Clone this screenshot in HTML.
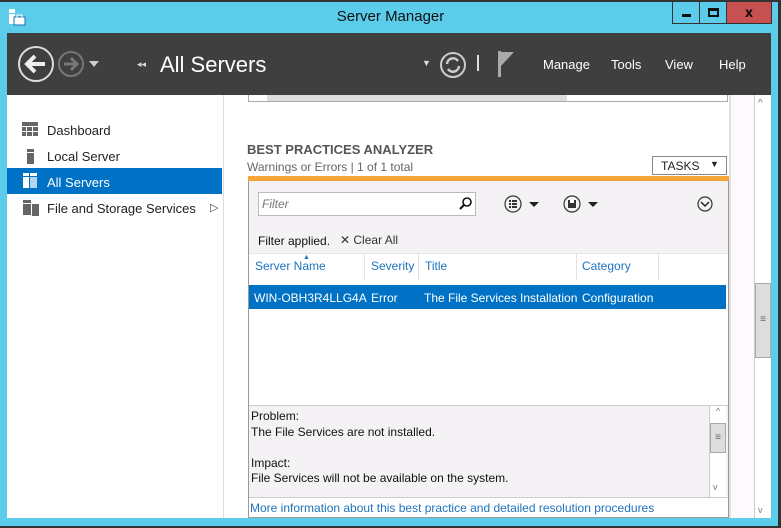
<!DOCTYPE html><html><head><style>
*{margin:0;padding:0;box-sizing:border-box}
body{width:781px;height:528px;overflow:hidden;background:#5bcdea;font-family:"Liberation Sans",sans-serif;position:relative;font-size:12px}
.a{position:absolute}
</style></head><body>
<div class="a" style="left:0;top:0;width:781px;height:2px;background:#333"></div>
<svg class="a" style="top:8px;left:8px" width="18" height="18"><rect x="1" y="1" width="6" height="4" fill="#fff"/><rect x="1" y="6" width="6" height="10" fill="#fff"/><rect x="6" y="9" width="11" height="8" fill="#fff" stroke="#1a6fb0"/><rect x="9" y="7" width="5" height="3" fill="none" stroke="#fff"/></svg>
<div class="a" style="left:0;width:781px;top:8px;text-align:center;font-size:15px;color:#111">Server Manager</div>
<div class="a" style="left:672px;top:2px;width:28px;height:22px;border:1px solid #333;border-top:none"><div class="a" style="left:9px;top:12px;width:9px;height:3px;background:#111"></div></div>
<div class="a" style="left:699px;top:2px;width:28px;height:22px;border:1px solid #333;border-top:none"><div class="a" style="left:8px;top:6px;width:11px;height:9px;border:2px solid #111;border-top-width:3px"></div></div>
<div class="a" style="left:726px;top:2px;width:46px;height:22px;background:#c75050;border:1px solid #333;border-top:none;text-align:center;font-weight:bold;font-size:14px;line-height:20px">x</div>
<div class="a" style="left:7px;top:33px;width:764px;height:62px;background:#3f3f3f"></div>
<svg class="a" style="left:17px;top:44px" width="90" height="40"><circle cx="19" cy="20" r="17" fill="none" stroke="#ddd" stroke-width="2"/><path d="M28 20H11M18 12l-8 8 8 8" fill="none" stroke="#eee" stroke-width="4"/><circle cx="54" cy="20" r="12" fill="none" stroke="#777" stroke-width="2"/><path d="M47 20h12M54 14l6 6-6 6" fill="none" stroke="#777" stroke-width="3"/><path d="M72 17h10l-5 6z" fill="#ccc"/></svg>
<div class="a" style="left:137px;top:59px;color:#ddd;font-size:9px">◂◂</div>
<div class="a" style="left:160px;top:52px;color:#fff;font-size:22px">All Servers</div>
<div class="a" style="left:422px;top:58px;color:#ddd;font-size:9px">▼</div>
<svg class="a" style="left:439px;top:51px" width="80" height="28"><circle cx="14" cy="14" r="12" fill="none" stroke="#ccc" stroke-width="2"/><path d="M8 13a6 6 0 0 1 11-3M20 15a6 6 0 0 1-11 3" fill="none" stroke="#ccc" stroke-width="2.5"/><rect x="38" y="4" width="2" height="16" fill="#ddd"/><rect x="59" y="0" width="3" height="26" fill="#aaa"/><path d="M62 1h13l-13 14z" fill="#aaa"/></svg>
<div class="a" style="left:543px;top:57px;color:#fff;font-size:13px">Manage</div>
<div class="a" style="left:611px;top:57px;color:#fff;font-size:13px">Tools</div>
<div class="a" style="left:665px;top:57px;color:#fff;font-size:13px">View</div>
<div class="a" style="left:719px;top:57px;color:#fff;font-size:13px">Help</div>
<div class="a" style="left:7px;top:95px;width:216px;height:423px;background:#fff"></div>
<div class="a" style="left:223px;top:95px;width:1px;height:423px;background:#ddd"></div>
<div class="a" style="left:224px;top:95px;width:530px;height:423px;background:#fff"></div>
<div class="a" style="left:729px;top:95px;width:25px;height:423px;background:#fdf9fd;border-left:2px solid #e0e0e0"></div>
<div class="a" style="left:754px;top:95px;width:17px;height:423px;background:#fff;border-left:1px solid #ccc"></div>
<div class="a" style="left:758px;top:98px;font-size:10px;color:#777">^</div>
<div class="a" style="left:755px;top:283px;width:16px;height:75px;background:#ddd;border:1px solid #aaa;text-align:center;line-height:72px;color:#666;font-size:10px">≡</div>
<div class="a" style="left:758px;top:505px;font-size:9px;color:#777">v</div>
<div class="a" style="left:248px;top:95px;width:480px;height:7px;background:#fff;border:1px solid #aaa;border-top:none"><div class="a" style="left:18px;top:0;width:300px;height:6px;background:#ddd"></div></div>
<svg class="a" style="left:22px;top:122px" width="20" height="100"><g fill="#666"><rect x="0" y="0" width="16" height="4"/><rect x="0" y="5" width="4" height="4"/><rect x="5" y="5" width="5" height="4"/><rect x="11" y="5" width="5" height="4"/><rect x="0" y="10" width="4" height="4"/><rect x="5" y="10" width="5" height="4"/><rect x="11" y="10" width="5" height="4"/><rect x="5" y="27" width="7" height="3"/><rect x="5" y="31" width="7" height="11"/><rect x="1" y="78" width="8" height="3"/><rect x="1" y="82" width="8" height="11"/><rect x="10" y="82" width="7" height="12"/></g></svg>
<div class="a" style="left:47px;top:123px;font-size:13px;color:#222">Dashboard</div>
<div class="a" style="left:47px;top:149px;font-size:13px;color:#222">Local Server</div>
<div class="a" style="left:7px;top:168px;width:215px;height:26px;background:#0072c6"></div>
<svg class="a" style="left:22px;top:173px" width="18" height="16"><rect x="1" y="0" width="6" height="3" fill="#fff"/><rect x="1" y="4" width="6" height="11" fill="#fff"/><rect x="8" y="0" width="7" height="3" fill="#fff"/><rect x="8" y="4" width="7" height="11" fill="#b3d7f0"/></svg>
<div class="a" style="left:47px;top:175px;font-size:13px;color:#fff">All Servers</div>
<div class="a" style="left:47px;top:201px;font-size:13px;color:#222">File and Storage Services</div>
<div class="a" style="left:210px;top:201px;font-size:11px;color:#444">▷</div>
<div class="a" style="left:247px;top:142px;font-size:13px;font-weight:bold;color:#555">BEST PRACTICES ANALYZER</div>
<div class="a" style="left:247px;top:160px;font-size:12px;color:#666">Warnings or Errors | 1 of 1 total</div>
<div class="a" style="left:652px;top:156px;width:75px;height:19px;border:1px solid #888;font-size:12px;color:#222;padding:2px 0 0 8px">TASKS<span style="position:absolute;left:57px;top:2px;font-size:9px">▼</span></div>
<div class="a" style="left:248px;top:176px;width:481px;height:342px;border:1px solid #999;border-top:none;background:#fff"></div>
<div class="a" style="left:248px;top:176px;width:481px;height:5px;background:#f6a539"></div>
<div class="a" style="left:249px;top:181px;width:479px;height:72px;background:#f5f2f5"></div>
<div class="a" style="left:258px;top:192px;width:218px;height:24px;background:#fff;border:1px solid #bbb;font-style:italic;color:#777;padding:4px 3px">Filter</div>
<svg class="a" style="left:458px;top:196px" width="16" height="16"><circle cx="9" cy="6" r="4" fill="none" stroke="#111" stroke-width="1.6"/><path d="M6 9l-4 4" stroke="#111" stroke-width="2"/></svg>
<svg class="a" style="left:503px;top:193px" width="220" height="22"><circle cx="10" cy="11" r="8" fill="none" stroke="#333" stroke-width="1.2"/><g fill="#333"><rect x="6" y="7" width="2" height="2"/><rect x="9" y="7" width="5" height="2"/><rect x="6" y="10" width="2" height="2"/><rect x="9" y="10" width="5" height="2"/><rect x="6" y="13" width="2" height="2"/><rect x="9" y="13" width="5" height="2"/></g><path d="M26 9h10l-5 5z" fill="#222"/><circle cx="69" cy="11" r="8" fill="none" stroke="#333" stroke-width="1.2"/><rect x="65" y="7" width="8" height="8" fill="#333"/><rect x="67" y="7" width="4" height="3" fill="#fff"/><path d="M85 9h10l-5 5z" fill="#222"/><circle cx="202" cy="11" r="7" fill="none" stroke="#333" stroke-width="1.2"/><path d="M198 9l4 4 4-4" fill="none" stroke="#222" stroke-width="1.5"/></svg>
<div class="a" style="left:258px;top:234px;font-size:12px;color:#111">Filter applied.</div>
<div class="a" style="left:340px;top:233px;font-size:12px;color:#333">✕ Clear All</div>
<div class="a" style="left:249px;top:253px;width:479px;height:1px;background:#e6e6e6"></div>
<div class="a" style="left:364px;top:254px;width:1px;height:26px;background:#e3e3e3"></div>
<div class="a" style="left:418px;top:254px;width:1px;height:26px;background:#e3e3e3"></div>
<div class="a" style="left:576px;top:254px;width:1px;height:26px;background:#e3e3e3"></div>
<div class="a" style="left:658px;top:254px;width:1px;height:26px;background:#e3e3e3"></div>
<div class="a" style="left:303px;top:254px;font-size:7px;color:#1e73be">▲</div>
<div class="a" style="left:255px;top:259px;color:#1e73be">Server Name</div>
<div class="a" style="left:371px;top:259px;color:#1e73be">Severity</div>
<div class="a" style="left:425px;top:259px;color:#1e73be">Title</div>
<div class="a" style="left:582px;top:259px;color:#1e73be">Category</div>
<div class="a" style="left:249px;top:285px;width:477px;height:24px;background:#0072c6;color:#fff;font-size:12px"><span class="a" style="left:5px;top:6px">WIN-OBH3R4LLG4A</span><span class="a" style="left:122px;top:6px">Error</span><span class="a" style="left:175px;top:6px">The File Services Installation</span><span class="a" style="left:333px;top:6px">Configuration</span></div>
<div class="a" style="left:249px;top:405px;width:479px;height:93px;background:#f5f2f5;border-top:1px solid #ccc;border-bottom:1px solid #ccc;font-size:12px;color:#111;line-height:15.5px;padding:3px 2px">Problem:<br>The File Services are not installed.<br><br>Impact:<br>File Services will not be available on the system.</div>
<div class="a" style="left:709px;top:406px;width:17px;height:91px;background:#fff;border-left:1px solid #ccc;font-size:9px;color:#777;text-align:center">^</div>
<div class="a" style="left:710px;top:423px;width:16px;height:30px;background:#ddd;border:1px solid #aaa;text-align:center;line-height:28px;font-size:10px;color:#666">≡</div>
<div class="a" style="left:713px;top:482px;font-size:9px;color:#777">v</div>
<div class="a" style="left:250px;top:501px;color:#1e73be;font-size:12px">More information about this best practice and detailed resolution procedures</div>
<div class="a" style="left:0;top:518px;width:781px;height:10px;background:#5bcdea"></div>
<div class="a" style="left:0;top:526px;width:781px;height:2px;background:#333"></div>
<div class="a" style="left:778px;top:0;width:3px;height:528px;background:#333"></div>
</body></html>
